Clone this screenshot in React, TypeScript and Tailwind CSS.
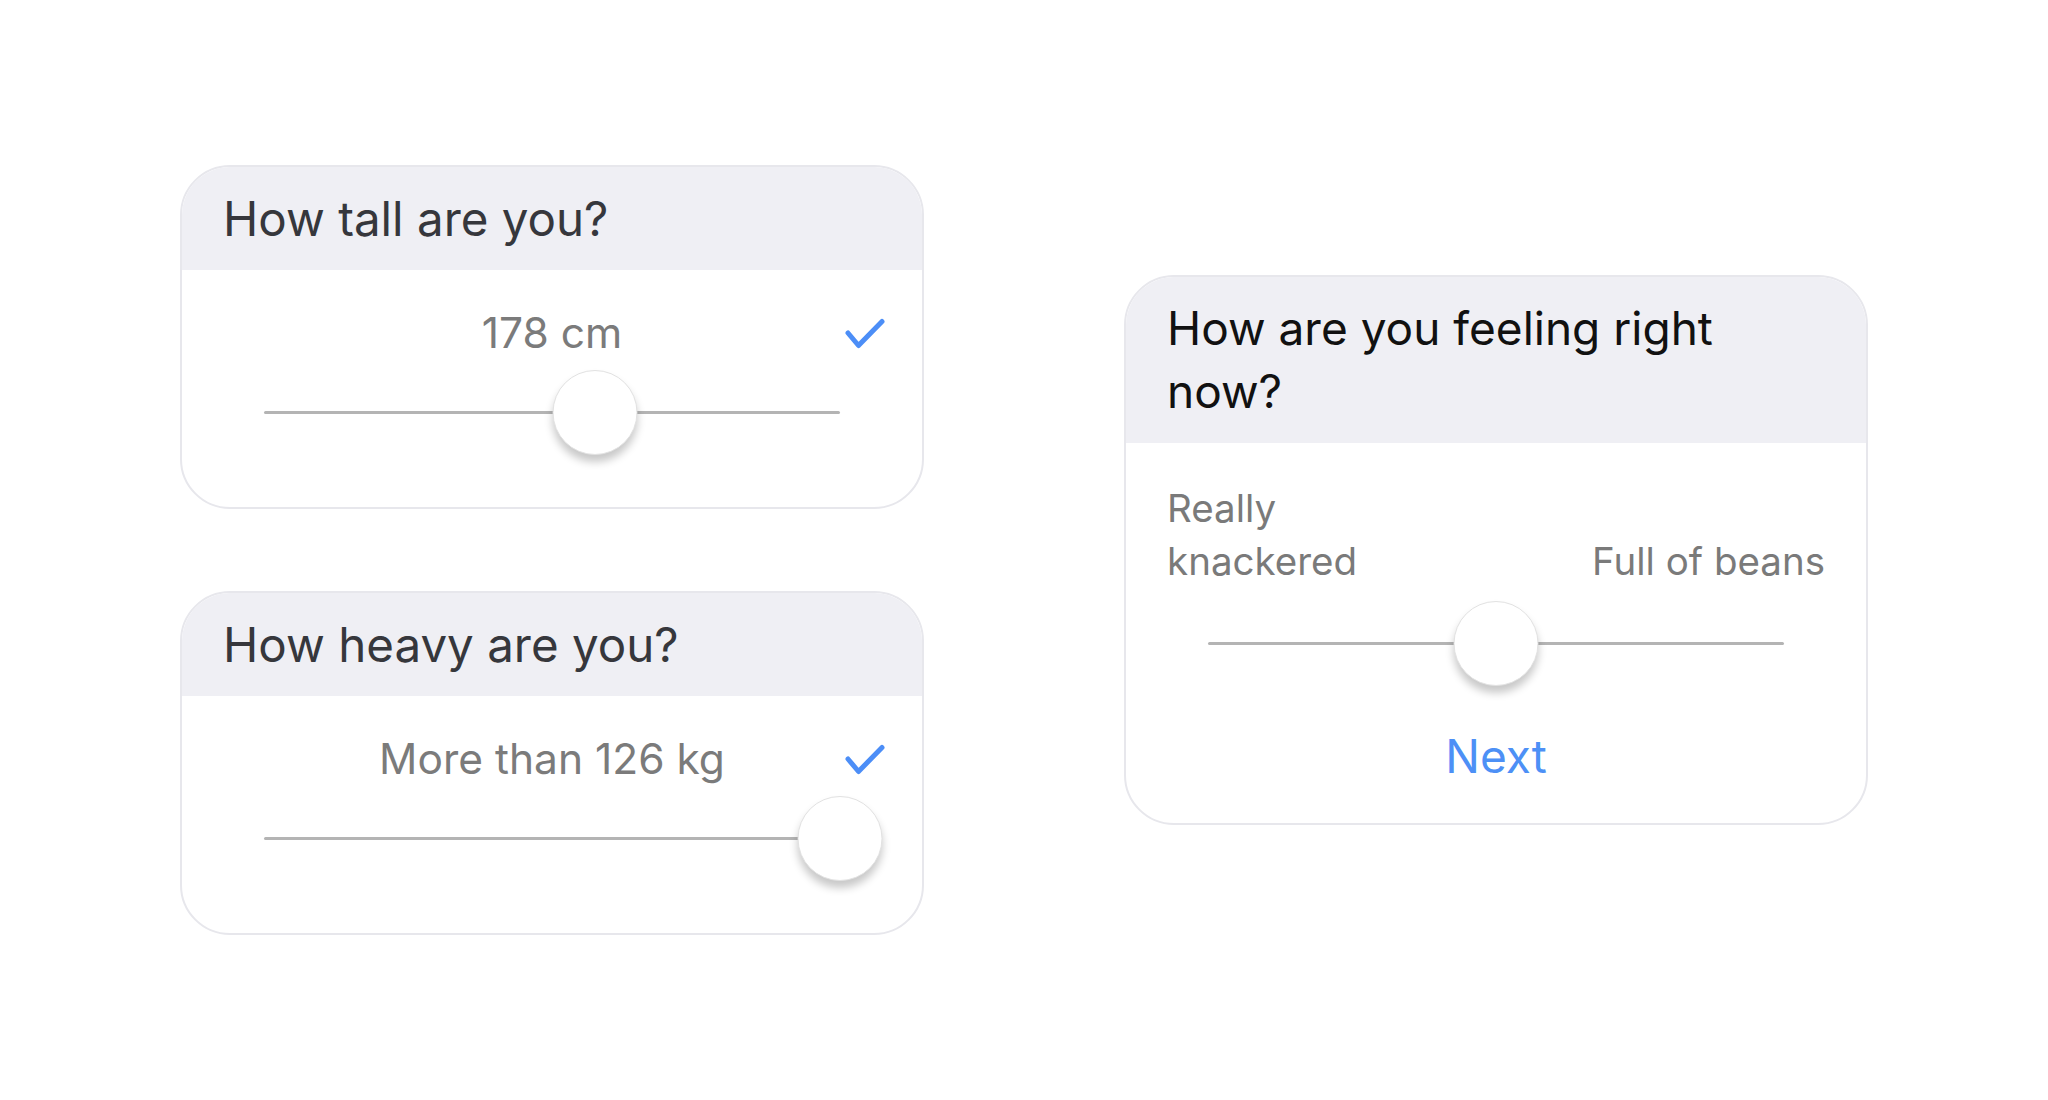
const font = { fontFamily: 'Inter, "Noto Sans", sans-serif' }

const Check = () => (
  <svg width="40" height="31" viewBox="0 0 40 31" fill="none">
    <path d="M3 15 L13.5 27.5 L37 3.5" stroke="#4c8ef7" strokeWidth="5" strokeLinecap="round" strokeLinejoin="round" />
  </svg>
)

const Slider = ({ value }: { value: number }) => (
  <div className="relative mx-[82px] flex h-[85px] items-center">
    <div className="h-[3px] w-full rounded-full bg-[#b4b4b4]" />
    <div
      className="absolute top-0 h-[85px] w-[85px] -translate-x-1/2 rounded-full border border-[#e2e2e2] bg-white shadow-[0_7px_9px_rgba(0,0,0,0.22)]"
      style={{ left: `${value * 100}%` }}
    />
  </div>
)

const Card = ({ title, dark, children }: { title: string; dark?: boolean; children: React.ReactNode }) => (
  <div className="w-[744px] overflow-hidden rounded-[50px] border-2 border-[#e7e7ec] bg-white">
    <div className="bg-[#efeff4] px-[41px] py-[20px]">
      <h2
        className={`max-w-[580px] leading-[63px] ${dark ? 'text-[46px] text-[#111111]' : 'text-[47.5px] text-[#36373c]'}`}
      >
        {title}
      </h2>
    </div>
    {children}
  </div>
)

const ValueCard = ({ title, value, pos }: { title: string; value: string; pos: number }) => (
  <Card title={title}>
    <div className="pt-[38px] pb-[52px]">
      <div className="grid grid-cols-[1fr_auto_1fr] items-center px-[37px]">
        <div />
        <span className="text-[42.5px] leading-[50px] text-[#7b7b7b]">{value}</span>
        <div className="flex justify-end">
          <Check />
        </div>
      </div>
      <div className="mt-[12px]">
        <Slider value={pos} />
      </div>
    </div>
  </Card>
)

export default function App() {
  return (
    <div className="flex min-h-[1100px] items-center justify-center gap-[200px] bg-white" style={font}>
      {/* left column */}
      <div className="flex flex-col gap-[82px]">
        <ValueCard title="How tall are you?" value="178 cm" pos={0.574} />
        <ValueCard title="How heavy are you?" value="More than 126 kg" pos={1} />
      </div>

      {/* mood card */}
      <Card title="How are you feeling right now?" dark>
        <div className="pt-[39px] pb-[39px]">
          <div className="flex items-end justify-between px-[41px] text-[38.5px] leading-[53px] text-[#7a7a7a]">
            <span className="max-w-[220px]">Really knackered</span>
            <span className="text-right">Full of beans</span>
          </div>
          <div className="mt-[13px]">
            <Slider value={0.5} />
          </div>
          <div className="mt-[42px] text-center text-[46px] leading-[56px] text-[#4d90f6]">Next</div>
        </div>
      </Card>
    </div>
  )
}
